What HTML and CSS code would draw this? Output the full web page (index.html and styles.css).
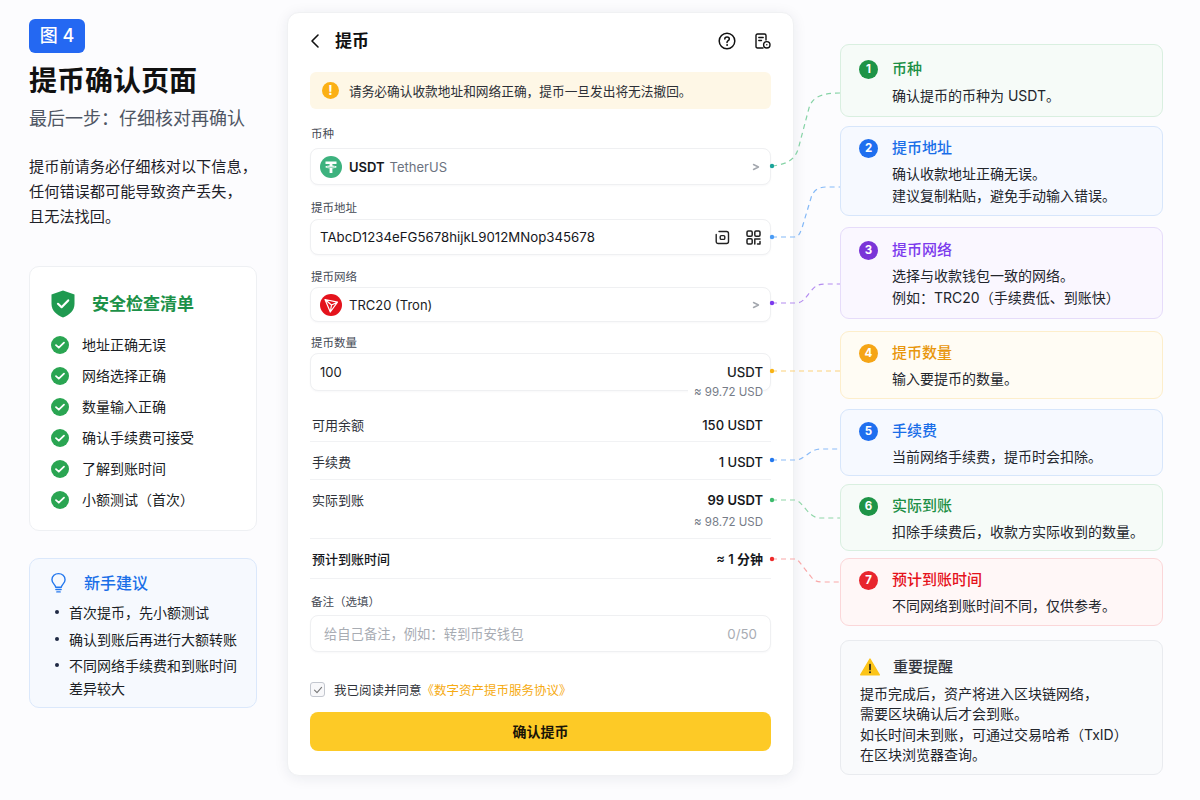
FILE: index.html
```html
<!DOCTYPE html>
<html lang="zh-CN">
<head>
  <meta charset="UTF-8">
  <meta name="viewport" content="width=device-width, initial-scale=1">
  <title>提币确认页面</title>
  <link rel="stylesheet" href="styles.css">
</head>
<body>
<div class="page">

  <div class="side">
    <div class="badge">图 4</div>
    <h1>提币确认页面</h1>
    <div class="subtitle">最后一步：仔细核对再确认</div>
    <p class="intro">提币前请务必仔细核对以下信息，<br>任何错误都可能导致资产丢失，<br>且无法找回。</p>

    <div class="checklist">
      <div class="checklist-head">
        <svg class="shield" viewBox="0 0 24 28">
          <path d="M12 0.5 L23.5 4.5 V14 C23.5 20.5 18.5 25 12 27.5 C5.5 25 0.5 20.5 0.5 14 V4.5 Z" fill="#1f9a50"/>
          <path d="M7 13.8 L10.6 17.2 L17.2 10.4" fill="none" stroke="#fff" stroke-width="2.2" stroke-linecap="round" stroke-linejoin="round"/>
        </svg>
        <span>安全检查清单</span>
      </div>
      <ul class="checks">
        <li><svg viewBox="0 0 18 18"><circle cx="9" cy="9" r="9" fill="#2aa552"/><path d="M5 9.2 L7.8 11.7 L13 6.6" fill="none" stroke="#fff" stroke-width="1.8" stroke-linecap="round" stroke-linejoin="round"/></svg>地址正确无误</li>
        <li><svg viewBox="0 0 18 18"><circle cx="9" cy="9" r="9" fill="#2aa552"/><path d="M5 9.2 L7.8 11.7 L13 6.6" fill="none" stroke="#fff" stroke-width="1.8" stroke-linecap="round" stroke-linejoin="round"/></svg>网络选择正确</li>
        <li><svg viewBox="0 0 18 18"><circle cx="9" cy="9" r="9" fill="#2aa552"/><path d="M5 9.2 L7.8 11.7 L13 6.6" fill="none" stroke="#fff" stroke-width="1.8" stroke-linecap="round" stroke-linejoin="round"/></svg>数量输入正确</li>
        <li><svg viewBox="0 0 18 18"><circle cx="9" cy="9" r="9" fill="#2aa552"/><path d="M5 9.2 L7.8 11.7 L13 6.6" fill="none" stroke="#fff" stroke-width="1.8" stroke-linecap="round" stroke-linejoin="round"/></svg>确认手续费可接受</li>
        <li><svg viewBox="0 0 18 18"><circle cx="9" cy="9" r="9" fill="#2aa552"/><path d="M5 9.2 L7.8 11.7 L13 6.6" fill="none" stroke="#fff" stroke-width="1.8" stroke-linecap="round" stroke-linejoin="round"/></svg>了解到账时间</li>
        <li><svg viewBox="0 0 18 18"><circle cx="9" cy="9" r="9" fill="#2aa552"/><path d="M5 9.2 L7.8 11.7 L13 6.6" fill="none" stroke="#fff" stroke-width="1.8" stroke-linecap="round" stroke-linejoin="round"/></svg>小额测试（首次）</li>
      </ul>
    </div>

    <div class="tips">
      <div class="tips-head">
        <svg class="bulb" viewBox="0 0 16 22" fill="none" stroke="#2478ee" stroke-width="1.5" stroke-linecap="round" stroke-linejoin="round">
          <path d="M5 15.5 C5 13 1 11.5 1 7.5 C1 3.6 4.2 1 8 1 C11.8 1 15 3.6 15 7.5 C15 11.5 11 13 11 15.5 Z"/>
          <path d="M5.2 18 H10.8"/>
          <path d="M6.2 20.5 H9.8"/>
        </svg>
        <span>新手建议</span>
      </div>
      <ul class="tips-list">
        <li>首次提币，先小额测试</li>
        <li>确认到账后再进行大额转账</li>
        <li>不同网络手续费和到账时间<br>差异较大</li>
      </ul>
    </div>
  </div>

  <div class="phone">
    <div class="topbar">
      <svg class="back" viewBox="0 0 10 16" fill="none" stroke="#111" stroke-width="1.6" stroke-linecap="round" stroke-linejoin="round"><path d="M8 2 L2 8 L8 14"/></svg>
      <span class="topbar-title">提币</span>
      <svg class="top-icon" viewBox="0 0 18 18" fill="none" stroke="#111" stroke-width="1.5" stroke-linecap="round"><circle cx="9" cy="9" r="7.8"/><path d="M6.8 7.1 C6.8 5.8 7.8 5 9 5 C10.3 5 11.3 5.8 11.3 7 C11.3 8.6 9 8.7 9 10.4"/><circle cx="9" cy="13" r="0.5" fill="#111" stroke-width="0.8"/></svg>
      <svg class="top-icon doc" viewBox="0 0 16 16" fill="none" stroke="#111" stroke-width="1.4" stroke-linecap="round" stroke-linejoin="round"><path d="M8 15 H2.5 C1.6 15 1 14.4 1 13.5 V2.5 C1 1.6 1.6 1 2.5 1 H9.5 C10.4 1 11 1.6 11 2.5 V7"/><path d="M3.8 4.5 H8.2 M3.8 7.5 H6.5"/><circle cx="11.8" cy="11.8" r="3.2"/><circle cx="11.8" cy="11.8" r="0.7" fill="#111" stroke="none"/></svg>
    </div>

    <div class="alert">
      <span class="alert-icon">!</span>
      <span>请务必确认收款地址和网络正确，提币一旦发出将无法撤回。</span>
    </div>

    <div class="label label-coin">币种</div>
    <div class="field field-coin">
      <svg class="coin" viewBox="0 0 22 22"><circle cx="11" cy="11" r="11" fill="#3db27e"/><path d="M5.5 5.5 H16.5 V8 H12.4 V9.6 C14.6 9.7 16.6 10.2 16.6 10.9 C16.6 11.6 14.6 12.1 12.4 12.2 V17 H9.6 V12.2 C7.4 12.1 5.4 11.6 5.4 10.9 C5.4 10.2 7.4 9.7 9.6 9.6 V8 H5.5 Z" fill="#fff"/><path d="M7 10.9 C8 11.4 14 11.4 15 10.9" fill="none" stroke="#3db27e" stroke-width="0.7"/></svg>
      <b class="coin-code">USDT</b>
      <span class="coin-name">TetherUS</span>
      <svg class="chev" viewBox="0 0 8 8" fill="none" stroke="#a3a7ae" stroke-width="1.4" stroke-linecap="round" stroke-linejoin="round"><path d="M1.5 1.5 L6.5 4 L1.5 6.5"/></svg>
    </div>

    <div class="label label-addr">提币地址</div>
    <div class="field field-addr">
      <span class="addr">TAbcD1234eFG5678hijkL9012MNop345678</span>
      <svg class="field-icon" viewBox="0 0 15 15" fill="none" stroke="#222" stroke-width="1.4" stroke-linecap="round" stroke-linejoin="round"><path d="M4 1.5 H11.5 C12.8 1.5 13.5 2.2 13.5 3.5 V11.5 C13.5 12.8 12.8 13.5 11.5 13.5 H3.2 C2 13.5 1.2 12.7 1.2 11.5 V4.5"/><rect x="5.2" y="5.6" width="4.6" height="3.8" rx="1.2"/></svg>
      <svg class="field-icon scan" viewBox="0 0 15 15" fill="none" stroke="#222" stroke-width="1.5" stroke-linejoin="round"><rect x="1" y="1" width="5.2" height="5.2" rx="1.2"/><rect x="8.8" y="1" width="5.2" height="5.2" rx="1.2"/><rect x="1" y="8.8" width="5.2" height="5.2" rx="1.2"/><path d="M8.8 9 V14 M8.8 9 H14 M11.5 14 H14 V11.5" stroke-linecap="round"/></svg>
    </div>

    <div class="label label-net">提币网络</div>
    <div class="field field-net">
      <svg class="coin" viewBox="0 0 22 22"><circle cx="11" cy="11" r="11" fill="#e4131c"/><path d="M5 5.5 L17.5 8.2 L10.3 18 Z M5 5.5 L11.5 11 L17.5 8.2 M11.5 11 L10.3 18" fill="none" stroke="#fff" stroke-width="1.2" stroke-linejoin="round"/></svg>
      <span class="net-name">TRC20 (Tron)</span>
      <svg class="chev" viewBox="0 0 8 8" fill="none" stroke="#a3a7ae" stroke-width="1.4" stroke-linecap="round" stroke-linejoin="round"><path d="M1.5 1.5 L6.5 4 L1.5 6.5"/></svg>
    </div>

    <div class="label label-amount">提币数量</div>
    <div class="field field-amount">
      <span class="amount">100</span>
      <span class="unit">USDT</span>
      <span class="approx approx-over">≈ 99.72 USD</span>
    </div>

    <div class="rows">
      <div class="row row-balance"><span>可用余额</span><b>150 USDT</b></div>
      <div class="row row-fee"><span>手续费</span><b>1 USDT</b></div>
      <div class="row row-real">
        <span>实际到账</span>
        <div class="row-right"><b>99 USDT</b><span class="approx">≈ 98.72 USD</span></div>
      </div>
      <div class="row row-time"><span>预计到账时间</span><b>≈ 1 分钟</b></div>
    </div>

    <div class="label label-memo">备注（选填）</div>
    <div class="field field-memo">
      <span class="placeholder">给自己备注，例如：转到币安钱包</span>
      <span class="count">0/50</span>
    </div>

    <div class="agree">
      <span class="checkbox"><svg viewBox="0 0 10 10" fill="none" stroke="#777" stroke-width="1.1" stroke-linecap="round" stroke-linejoin="round"><path d="M1.5 5.2 L4 7.6 L8.6 2.4"/></svg></span>
      <span>我已阅读并同意</span>
      <span class="agree-link">《数字资产提币服务协议》</span>
    </div>

    <div class="submit">确认提币</div>
  </div>

  <div class="notes">
    <div class="note note-green n1">
      <div class="note-head"><i>1</i><span>币种</span></div>
      <p>确认提币的币种为 USDT。</p>
    </div>
    <div class="note note-blue n2">
      <div class="note-head"><i>2</i><span>提币地址</span></div>
      <p>确认收款地址正确无误。<br>建议复制粘贴，避免手动输入错误。</p>
    </div>
    <div class="note note-purple n3">
      <div class="note-head"><i>3</i><span>提币网络</span></div>
      <p>选择与收款钱包一致的网络。<br>例如：TRC20（手续费低、到账快）</p>
    </div>
    <div class="note note-orange n4">
      <div class="note-head"><i>4</i><span>提币数量</span></div>
      <p>输入要提币的数量。</p>
    </div>
    <div class="note note-blue n5">
      <div class="note-head"><i>5</i><span>手续费</span></div>
      <p>当前网络手续费，提币时会扣除。</p>
    </div>
    <div class="note note-green n6">
      <div class="note-head"><i>6</i><span>实际到账</span></div>
      <p>扣除手续费后，收款方实际收到的数量。</p>
    </div>
    <div class="note note-red n7">
      <div class="note-head"><i>7</i><span>预计到账时间</span></div>
      <p>不同网络到账时间不同，仅供参考。</p>
    </div>
    <div class="remind">
      <div class="remind-head">
        <svg viewBox="0 0 20 18"><path d="M10 1 L19.3 16.8 H0.7 Z" fill="#fcc419" stroke="#fcc419" stroke-width="1.4" stroke-linejoin="round"/><path d="M10 6.5 V11.5" stroke="#222" stroke-width="1.7" stroke-linecap="round"/><circle cx="10" cy="14.2" r="1" fill="#222"/></svg>
        <span>重要提醒</span>
      </div>
      <p>提币完成后，资产将进入区块链网络，<br>需要区块确认后才会到账。<br>如长时间未到账，可通过交易哈希（TxID）<br>在区块浏览器查询。</p>
    </div>
  </div>

  <svg class="links" viewBox="0 0 1200 800" fill="none" stroke-width="1.2" stroke-dasharray="5 4">
    <path d="M772 166 C790 164 796 158 799 146 L809 108 C812 98 820 93 840 93" stroke="#86d3a6"/>
    <circle cx="772" cy="166" r="2.2" fill="#1aa39a" stroke="none"/>
    <path d="M772 237 L794 237 C799 237 800 233 802 228 L811 198 C813 191 818 187 826 187 L840 187" stroke="#84b9f7"/>
    <circle cx="772" cy="237" r="2.2" fill="#4b9cf5" stroke="none"/>
    <path d="M772 303 L796 303 C803 303 806 297 811 291 C815 286 818 284 825 284 L840 284" stroke="#b48cf0"/>
    <circle cx="772" cy="303" r="2.2" fill="#7c3aed" stroke="none"/>
    <path d="M772 371 L840 371" stroke="#fcd27a"/>
    <circle cx="772" cy="371" r="2.2" fill="#f8b314" stroke="none"/>
    <path d="M772 460 L796 460 C804 460 810 449 820 449 L840 449" stroke="#8cbcf8"/>
    <circle cx="772" cy="460" r="2.2" fill="#2478ee" stroke="none"/>
    <path d="M772 500 L795 500 C802 500 808 518 820 518 L840 518" stroke="#8fd6a8"/>
    <circle cx="772" cy="500" r="2.2" fill="#3dbb6c" stroke="none"/>
    <path d="M772 559 L797 559 L812 578 Q815 582 822 582 L840 582" stroke="#f9a8a8"/>
    <circle cx="772" cy="559" r="2.2" fill="#ee2b2b" stroke="none"/>
  </svg>
</div>
</body>
</html>
```

FILE: styles.css
```css
* {
  box-sizing: border-box;
}

body {
  margin: 0;
  background: #fcfcfe;
  color: #1a1d24;
  font-family: Inter, "Noto Sans CJK SC", sans-serif;
}

.page {
  position: relative;
  width: 1200px;
  height: 800px;
  overflow: hidden;
  display: grid;
  grid-template-columns: 228px 507px 339px;
  column-gap: 30px;
  padding-left: 29px;
}

/* left column */
.side {
  padding-top: 19px;
}

.badge {
  width: 56px;
  height: 34px;
  line-height: 34px;
  text-align: center;
  background: #2468f2;
  color: #fff;
  font-size: 18px;
  font-weight: 500;
  border-radius: 6px;
}

h1 {
  margin: 9px 0 0;
  font-size: 28px;
  line-height: 38px;
  font-weight: 700;
  color: #111;
}

.subtitle {
  margin-top: 7px;
  font-size: 18px;
  line-height: 24px;
  color: #4f5664;
}

.intro {
  margin: 23px 0 0;
  font-size: 15.2px;
  line-height: 25px;
  color: #1d2028;
}

.checklist {
  margin-top: 37px;
  height: 265px;
  padding: 23px 21px 0;
  background: #fff;
  border: 1px solid #eef0f3;
  border-radius: 10px;
}

.checklist-head {
  display: flex;
  align-items: center;
  gap: 17px;
  color: #1c9148;
  font-size: 17px;
  line-height: 20px;
  font-weight: 600;
}

.shield {
  width: 24px;
  height: 28px;
}

.checks {
  list-style: none;
  margin: 11px 0 0;
  padding: 0;
}

.checks li {
  display: flex;
  align-items: center;
  gap: 13px;
  height: 31px;
  font-size: 14px;
  line-height: 20px;
}

.checks svg {
  width: 18px;
  height: 18px;
}

.tips {
  margin-top: 27px;
  height: 150px;
  padding: 13px 10px 0 21px;
  background: #f6f9fe;
  border: 1px solid #dbe8fb;
  border-radius: 10px;
}

.tips-head {
  display: flex;
  align-items: center;
  gap: 18px;
  color: #1a6fe8;
  font-size: 16px;
  line-height: 20px;
  font-weight: 500;
}

.bulb {
  width: 15px;
  height: 22px;
}

.tips-list {
  list-style: none;
  margin: 7px 0 0;
  padding: 0 0 0 18px;
  font-size: 14px;
  line-height: 23px;
}

.tips-list li {
  position: relative;
  margin-bottom: 3.5px;
}

.tips-list li::before {
  content: "";
  position: absolute;
  left: -14px;
  top: 9px;
  width: 4px;
  height: 4px;
  border-radius: 50%;
  background: #1f2a44;
}

/* phone card */
.phone {
  margin-top: 12px;
  height: 764px;
  padding: 0 22px;
  background: #fff;
  border: 1px solid #f0f1f3;
  border-radius: 12px;
  box-shadow: 0 2px 14px rgba(30, 40, 70, 0.08);
}

.topbar {
  display: flex;
  align-items: center;
  height: 56px;
}

.back {
  width: 10px;
  height: 16px;
}

.topbar-title {
  margin-left: 15px;
  font-size: 17px;
  line-height: 20px;
  font-weight: 600;
  color: #111;
}

.top-icon {
  margin-left: auto;
  width: 18px;
  height: 18px;
}

.top-icon.doc {
  margin-left: 19px;
  width: 16px;
  height: 16px;
}

.alert {
  display: flex;
  align-items: center;
  gap: 10px;
  height: 37px;
  margin-top: 3px;
  padding-left: 12px;
  background: #fef7e6;
  border-radius: 6px;
  font-size: 12.7px;
  color: #2c2f36;
}

.alert-icon {
  width: 17px;
  height: 17px;
  line-height: 17px;
  text-align: center;
  background: #fbb015;
  color: #fff;
  font-size: 13px;
  font-weight: 700;
  border-radius: 50%;
}

.label {
  font-size: 11.5px;
  line-height: 16px;
  color: #454a55;
  padding-left: 1px;
}

.label-coin { margin-top: 17px; }
.label-addr { margin-top: 15px; }
.label-net { margin-top: 14px; }
.label-amount { margin-top: 13px; }
.label-memo { margin-top: 15px; }

.field {
  position: relative;
  display: flex;
  align-items: center;
  margin-top: 6px;
  padding: 0 9px;
  background: #fff;
  border: 1px solid #eff0f2;
  border-radius: 8px;
  font-size: 13px;
  line-height: 18px;
  box-shadow: 0 1px 2px rgba(30, 40, 70, 0.03);
}

.field-coin { height: 37px; }
.field-addr { height: 36px; margin-top: 3px; }
.field-net { height: 35px; margin-top: 2px; }
.field-amount { height: 38px; margin-top: 2px; }
.field-memo { height: 37px; margin-top: 5px; padding: 0 13px; font-size: 13.3px; }

.coin {
  width: 22px;
  height: 22px;
  margin-right: 7px;
}

.coin-code {
  font-weight: 600;
  color: #15171c;
}

.coin-name {
  margin-left: 5px;
  color: #6b7280;
}

.chev {
  margin-left: auto;
  width: 8px;
  height: 8px;
  margin-right: 1px;
}

.addr {
  font-size: 13.25px;
  color: #15171c;
}

.field-icon {
  margin-left: auto;
  width: 15px;
  height: 15px;
  margin-right: 8px;
}

.field-icon.scan {
  margin-left: 8px;
  margin-right: 0;
}

.unit {
  margin-left: auto;
  margin-right: -2px;
  font-size: 13.2px;
  font-weight: 500;
}

.approx {
  font-size: 11.5px;
  color: #767c88;
}

.approx-over {
  position: absolute;
  right: 7px;
  bottom: -10px;
  padding-left: 6px;
  background: #fff;
  line-height: 15px;
}

.rows {
  margin-top: 14px;
  font-size: 13px;
}

.row {
  display: flex;
  justify-content: space-between;
  align-items: flex-start;
  padding-left: 2px;
  padding-right: 8px;
  border-bottom: 1px solid #f1f2f4;
  line-height: 19px;
  color: #2d3038;
}

.row b {
  font-weight: 500;
  font-size: 13px;
  color: #15171c;
}

.row-balance { height: 37px; padding-top: 11px; }
.row-fee { height: 38px; padding-top: 11px; }
.row-real { height: 59px; padding-top: 11px; }
.row-time { height: 40px; padding-top: 10.5px; font-weight: 500; color: #15171c; }
.row-time b { font-weight: 600; }

.row-right {
  display: flex;
  flex-direction: column;
  align-items: flex-end;
  gap: 3px;
}

.row-right b {
  font-weight: 600;
}

.placeholder {
  color: #a8acb3;
}

.count {
  margin-left: auto;
  color: #a8acb3;
}

.agree {
  display: flex;
  align-items: center;
  height: 15px;
  margin-top: 30px;
  font-size: 12.5px;
  color: #30333a;
}

.checkbox {
  display: flex;
  align-items: center;
  justify-content: center;
  width: 15px;
  height: 15px;
  margin-right: 9px;
  border: 1px solid #c3c7cf;
  border-radius: 3px;
  background: #f8f8fa;
}

.checkbox svg {
  width: 10px;
  height: 10px;
}

.agree-link {
  color: #f6ab12;
}

.submit {
  height: 39px;
  line-height: 39px;
  margin-top: 15px;
  text-align: center;
  background: #fdca26;
  border-radius: 8px;
  font-size: 14px;
  font-weight: 600;
  color: #1a1508;
}

/* right column */
.notes {
  padding-top: 44px;
  padding-left: 16px;
}

.note {
  padding: 0 10px 0 18px;
  border: 1px solid;
  border-radius: 9px;
}

.note-head {
  display: flex;
  align-items: center;
  gap: 14px;
  line-height: 20px;
  font-size: 15px;
  font-weight: 500;
}

.note-head i {
  width: 19px;
  height: 19px;
  line-height: 19px;
  text-align: center;
  border-radius: 50%;
  color: #fff;
  font-size: 11.5px;
  font-style: normal;
  font-weight: 700;
}

.note p {
  margin: 5px 0 0 33px;
  font-size: 14px;
  line-height: 22px;
  color: #22252c;
}

.note-green { background: #f6fbf8; border-color: #d9efe0; }
.note-green .note-head { color: #1c8f46; }
.note-green i { background: #1e9447; }

.note-blue { background: #f6f9ff; border-color: #d7e6fb; }
.note-blue .note-head { color: #1a6ee8; }
.note-blue i { background: #1f6fef; }

.note-purple { background: #faf7ff; border-color: #e6dcfa; }
.note-purple .note-head { color: #7c3aed; }
.note-purple i { background: #7a35d8; }

.note-orange { background: #fffcf4; border-color: #fdeecb; }
.note-orange .note-head { color: #e8960c; }
.note-orange i { background: #f5a516; }

.note-red { background: #fff7f7; border-color: #fbd7d9; }
.note-red .note-head { color: #e5121c; }
.note-red i { background: #e8262e; }

.n1 { height: 73px; margin-bottom: 9px; padding-top: 14px; }
.n1 p { margin-top: 6px; }
.n2 { height: 90px; margin-bottom: 11px; padding-top: 11px; }
.n3 { height: 92px; margin-bottom: 12px; padding-top: 12px; }
.n4 { height: 68px; margin-bottom: 10px; padding-top: 11px; }
.n5 { height: 67px; margin-bottom: 8px; padding-top: 11px; }
.n6 { height: 67px; margin-bottom: 7px; padding-top: 11px; }
.n7 { height: 68px; margin-bottom: 14px; padding-top: 11px; }

.remind {
  height: 135px;
  padding: 16px 10px 0 19px;
  background: #f9fafc;
  border: 1px solid #e9ebef;
  border-radius: 9px;
}

.remind-head {
  display: flex;
  align-items: center;
  gap: 13px;
  font-size: 15px;
  font-weight: 500;
  line-height: 20px;
  color: #33363d;
}

.remind-head svg {
  width: 20px;
  height: 18px;
}

.remind p {
  margin: 7px 0 0;
  font-size: 14px;
  line-height: 20.3px;
  color: #22252c;
}

/* dashed leader lines, they run over the card edge */
.links {
  position: absolute;
  left: 0;
  top: 0;
  width: 1200px;
  height: 800px;
  pointer-events: none;
}
```
